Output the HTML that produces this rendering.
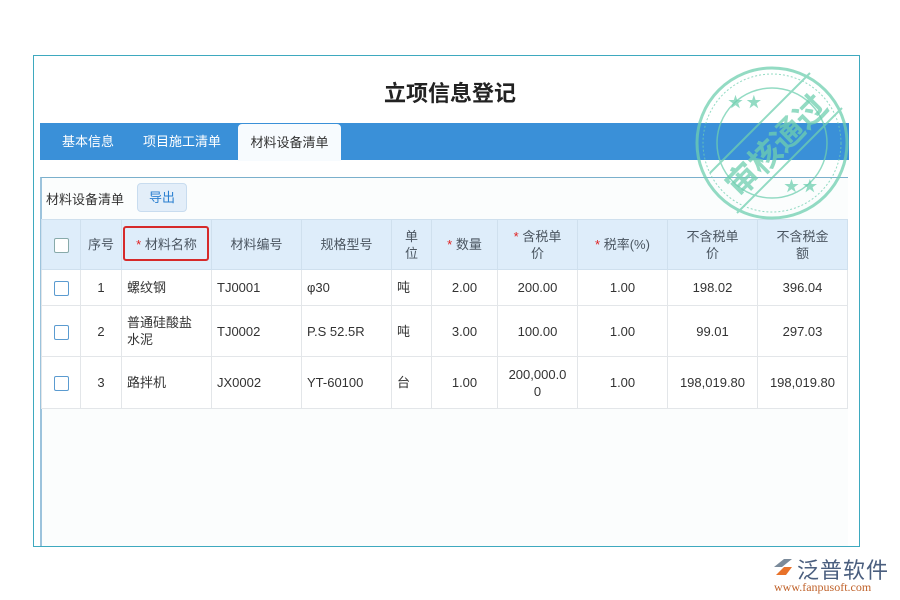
<!DOCTYPE html>
<html><head><meta charset="utf-8"><style>
*{margin:0;padding:0;box-sizing:border-box}
body{width:900px;height:600px;background:#fff;position:relative;overflow:hidden;font-family:"Liberation Sans","Noto Sans CJK SC",sans-serif;color:#333}
.outer{position:absolute;left:33px;top:55px;width:827px;height:492px;border:1px solid #3ea9bf;z-index:5;pointer-events:none}
.title{position:absolute;left:0;width:900px;top:76px;text-align:center;font-size:22px;font-weight:bold;color:#222}
.tabbar{position:absolute;left:40px;top:123px;width:809px;height:37px;background:#3a90d8}
.tab{position:absolute;top:0;height:37px;line-height:37px;font-size:13px;color:#fff}
.tab.act{background:#f7fbfe;color:#333;top:1px;border-radius:4px 4px 0 0;text-align:center}
.panel{position:absolute;left:40px;top:177px;width:808px;height:369px;border-left:2px solid #9cc3dc;border-top:1px solid #7bb0cc;background:#fbfdfd}
.tool{position:absolute;left:46px;top:189px;font-size:13px}
.btn{position:absolute;left:137px;top:183px;width:50px;height:29px;border:1px solid #c8dcef;background:#e3eef9;border-radius:4px;color:#2a7fd0;font-size:13px;text-align:center;line-height:27px}
table{position:absolute;left:41px;top:219px;border-collapse:collapse;table-layout:fixed;font-size:13px}
td{border:1px solid #e3e6e9;text-align:center;vertical-align:middle;line-height:17px;color:#333;background:#fff}
thead td{background:#deedfa;border-color:#cfe0ee;color:#4a5560;height:50px}
td.l{text-align:left;padding-left:5px}
.s{color:#e02020}
.cb{display:inline-block;width:15px;height:15px;border:1.5px solid #5b9bd0;border-radius:2px;background:#fff;vertical-align:middle}
thead .cb{border-color:#8aa;}
.red{position:absolute;left:123px;top:226px;width:86px;height:35px;border:2px solid #d62a2a;border-radius:3px}
.logo{position:absolute;left:772px;top:553px}
</style></head><body>
<div class="outer"></div>
<div class="title">立项信息登记</div>
<div class="tabbar">
<div class="tab" style="left:22px">基本信息</div>
<div class="tab" style="left:103px">项目施工清单</div>
<div class="tab act" style="left:198px;width:103px">材料设备清单</div>
</div>
<div class="panel"></div>
<div class="tool">材料设备清单</div>
<div class="btn">导出</div>
<table>
<colgroup><col style="width:39px"><col style="width:41px"><col style="width:90px"><col style="width:90px"><col style="width:90px"><col style="width:40px"><col style="width:66px"><col style="width:80px"><col style="width:90px"><col style="width:90px"><col style="width:90px"></colgroup>
<thead><tr><td><span class="cb"></span></td><td>序号</td><td><span class="s">*</span> 材料名称</td><td>材料编号</td><td>规格型号</td><td>单<br>位</td><td><span class="s">*</span> 数量</td><td><span class="s">*</span> 含税单<br>价</td><td><span class="s">*</span> 税率(%)</td><td>不含税单<br>价</td><td>不含税金<br>额</td></tr></thead>
<tbody>
<tr style="height:36px"><td><span class="cb"></span></td><td>1</td><td class="l">螺纹钢</td><td class="l">TJ0001</td><td class="l">φ30</td><td class="l">吨</td><td>2.00</td><td>200.00</td><td>1.00</td><td>198.02</td><td>396.04</td></tr>
<tr style="height:51px"><td><span class="cb"></span></td><td>2</td><td class="l">普通硅酸盐<br>水泥</td><td class="l">TJ0002</td><td class="l">P.S 52.5R</td><td class="l">吨</td><td>3.00</td><td>100.00</td><td>1.00</td><td>99.01</td><td>297.03</td></tr>
<tr style="height:52px"><td><span class="cb"></span></td><td>3</td><td class="l">路拌机</td><td class="l">JX0002</td><td class="l">YT-60100</td><td class="l">台</td><td>1.00</td><td>200,000.0<br>0</td><td>1.00</td><td>198,019.80</td><td>198,019.80</td></tr>
</tbody></table>
<div class="red"></div>
<svg style="position:absolute;left:692px;top:63px;z-index:6" width="160" height="160" viewBox="0 0 160 160">
<g fill="none" stroke="#6fcfb0" opacity="0.75">
<circle cx="80" cy="80" r="75" stroke-width="3"/>
<circle cx="80" cy="80" r="69" stroke-width="1" stroke-dasharray="2 2"/>
<circle cx="80" cy="80" r="55" stroke-width="1.5"/>
<line x1="18" y1="110" x2="118" y2="10" stroke-width="2"/>
<line x1="45" y1="150" x2="150" y2="45" stroke-width="2"/>
</g>
<g fill="#6fcfb0" opacity="0.75" font-weight="bold" font-family="'Noto Sans CJK SC',sans-serif">
<text transform="translate(84,82) rotate(-45)" text-anchor="middle" dy="12" font-size="32">审核通过</text>
<text x="36" y="44" font-size="15">★ ★</text>
<text x="92" y="128" font-size="15">★ ★</text>
</g>
</svg>
<div class="logo">
<svg width="22" height="20" style="position:absolute;left:0;top:4px"><path d="M2 10 L12 2 L20 2 L10 10Z" fill="#7a8a9a"/><path d="M4 18 L12 10 L20 10 L14 18Z" fill="#e8722a"/></svg>
<div style="position:absolute;left:25px;top:0;font-size:22px;color:#4a5e7e;letter-spacing:1px;white-space:nowrap">泛普软件</div>
<div style="position:absolute;left:2px;top:27px;font-size:12px;color:#c0622a;font-family:'Liberation Serif',serif;white-space:nowrap">www.fanpusoft.com</div>
</div>
</body></html>
